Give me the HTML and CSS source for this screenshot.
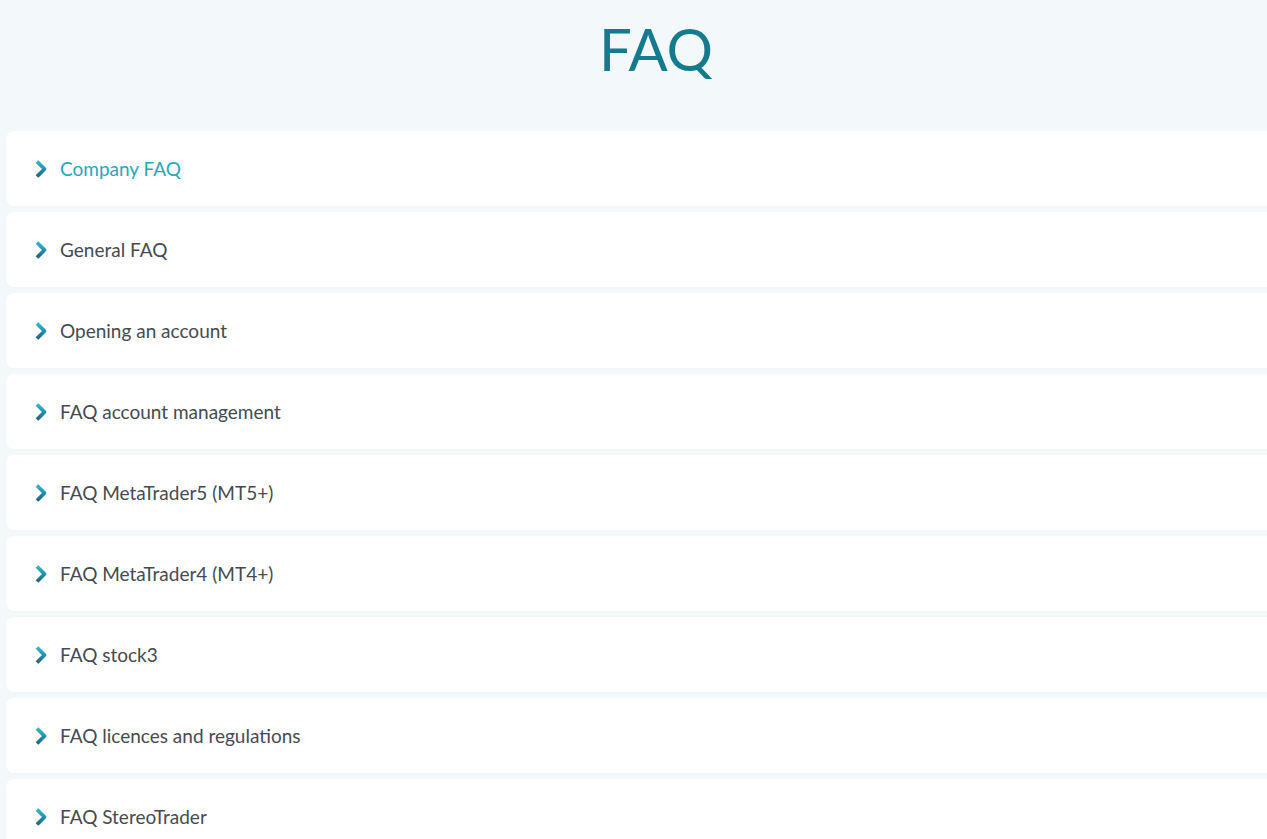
FILE: index.html
```html
<!DOCTYPE html>
<html lang="en">
  <head>
    <meta charset="UTF-8" />
    <title>FAQ</title>
    <link rel="stylesheet" href="styles.css">
  </head>
  <body>
    <div class="page">
      <h1>FAQ</h1>

      <div class="faq-list">
        <div class="faq-item active">
          <span class="chevron"></span>
          <span class="faq-title">Company FAQ</span>
        </div>
        <div class="faq-item">
          <span class="chevron"></span>
          <span class="faq-title">General FAQ</span>
        </div>
        <div class="faq-item">
          <span class="chevron"></span>
          <span class="faq-title">Opening an account</span>
        </div>
        <div class="faq-item">
          <span class="chevron"></span>
          <span class="faq-title">FAQ account management</span>
        </div>
        <div class="faq-item">
          <span class="chevron"></span>
          <span class="faq-title">FAQ MetaTrader5 (MT5+)</span>
        </div>
        <div class="faq-item">
          <span class="chevron"></span>
          <span class="faq-title">FAQ MetaTrader4 (MT4+)</span>
        </div>
        <div class="faq-item">
          <span class="chevron"></span>
          <span class="faq-title">FAQ stock3</span>
        </div>
        <div class="faq-item">
          <span class="chevron"></span>
          <span class="faq-title">FAQ licences and regulations</span>
        </div>
        <div class="faq-item">
          <span class="chevron"></span>
          <span class="faq-title">FAQ StereoTrader</span>
        </div>
      </div>
    </div>

    <svg width="0" height="0" style="position:absolute">
      <defs>
        <linearGradient id="chevGrad" x1="0" y1="0" x2="0" y2="20" gradientUnits="userSpaceOnUse">
          <stop offset="0.15" stop-color="#2cb6d2" />
          <stop offset="0.95" stop-color="#1c5d7e" />
        </linearGradient>
      </defs>
    </svg>

    <script>
      document.querySelectorAll(".chevron").forEach((el) => {
        el.innerHTML =
          '<svg width="14" height="20" viewBox="0 0 14 20"><path d="M3 2.5 L10.5 10 L3 17.5" fill="none" stroke="url(#chevGrad)" stroke-width="3.8" stroke-linejoin="round"/></svg>';
      });
    </script>
  </body>
</html>
```

FILE: styles.css
```css
html,
body {
  margin: 0;
  padding: 0;
  overflow-x: hidden;
}
body {
  font-family: Lato, "Open Sans", sans-serif;
  background: #f3f8fb;
}
.page {
  width: 1300px;
  margin-left: 6px;
}
h1 {
  margin: 0;
  height: 131px;
  box-sizing: border-box;
  padding-top: 14px;
  text-align: center;
  font-size: 58px;
  font-weight: 400;
  line-height: 70px;
  color: #137b8d;
}
.faq-list {
  display: flex;
  flex-direction: column;
  gap: 6px;
}
.faq-item {
  display: flex;
  align-items: center;
  gap: 12px;
  height: 75px;
  padding-left: 28px;
  background: white;
  border-radius: 8px;
  box-shadow: 0 1px 3px rgba(0, 0, 0, 0.02);
}
.chevron {
  display: flex;
  width: 14px;
  height: 20px;
}
.faq-title {
  font-size: 19px;
  color: #454b50;
}
.active .faq-title {
  color: #1ea9be;
}
```
